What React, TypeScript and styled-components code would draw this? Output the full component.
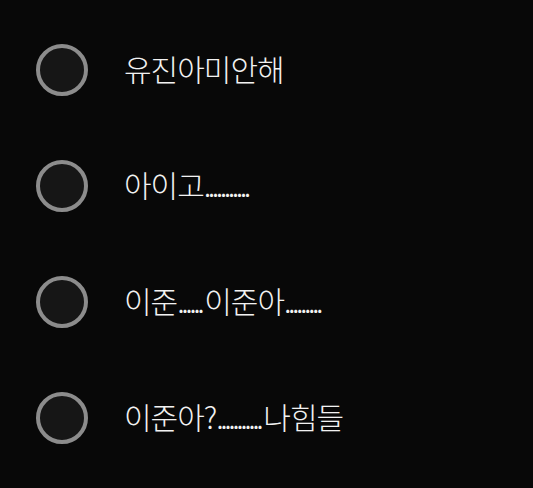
import React from "react";
import styled, { createGlobalStyle } from "styled-components";

const GlobalStyle = createGlobalStyle`
  html, body {
    margin: 0;
    padding: 0;
    background: #080808;
  }
`;

const options = [
  "유진아미안해",
  "아이고...........",
  "이준......이준아.........",
  "이준아?...........나힘들",
];

// dot runs are set tighter than the hangul around them
function renderLabel(text: string) {
  return text.split(/(\.+)/).map((part, i) =>
    part.startsWith(".") ? <Dots key={i}>{part}</Dots> : part
  );
}

export default function App() {
  return (
    <>
      <GlobalStyle />
      <OptionList>
        {options.map((label) => (
          <OptionRow key={label}>
            <Radio />
            <Label>{renderLabel(label)}</Label>
          </OptionRow>
        ))}
      </OptionList>
    </>
  );
}

const OptionList = styled.div`
  display: flex;
  flex-direction: column;
  padding: 12px 0 0 36px;
  height: 488px;
  box-sizing: border-box;
  background: #080808;
`;

const OptionRow = styled.div`
  display: flex;
  align-items: center;
  gap: 36px;
  height: 116px;
`;

const Radio = styled.div`
  width: 52px;
  height: 52px;
  box-sizing: border-box;
  border-radius: 50%;
  border: 4px solid #8c8c8c;
  background: #161616;
  flex-shrink: 0;
`;

const Label = styled.span`
  color: #f2f2f2;
  font-family: "Noto Sans CJK KR", "Noto Sans", sans-serif;
  font-size: 30px;
  font-weight: 300;
  letter-spacing: -1px;
  margin-top: -4px;
`;

const Dots = styled.span`
  letter-spacing: -3.5px;
  margin-right: 3px;
`;
